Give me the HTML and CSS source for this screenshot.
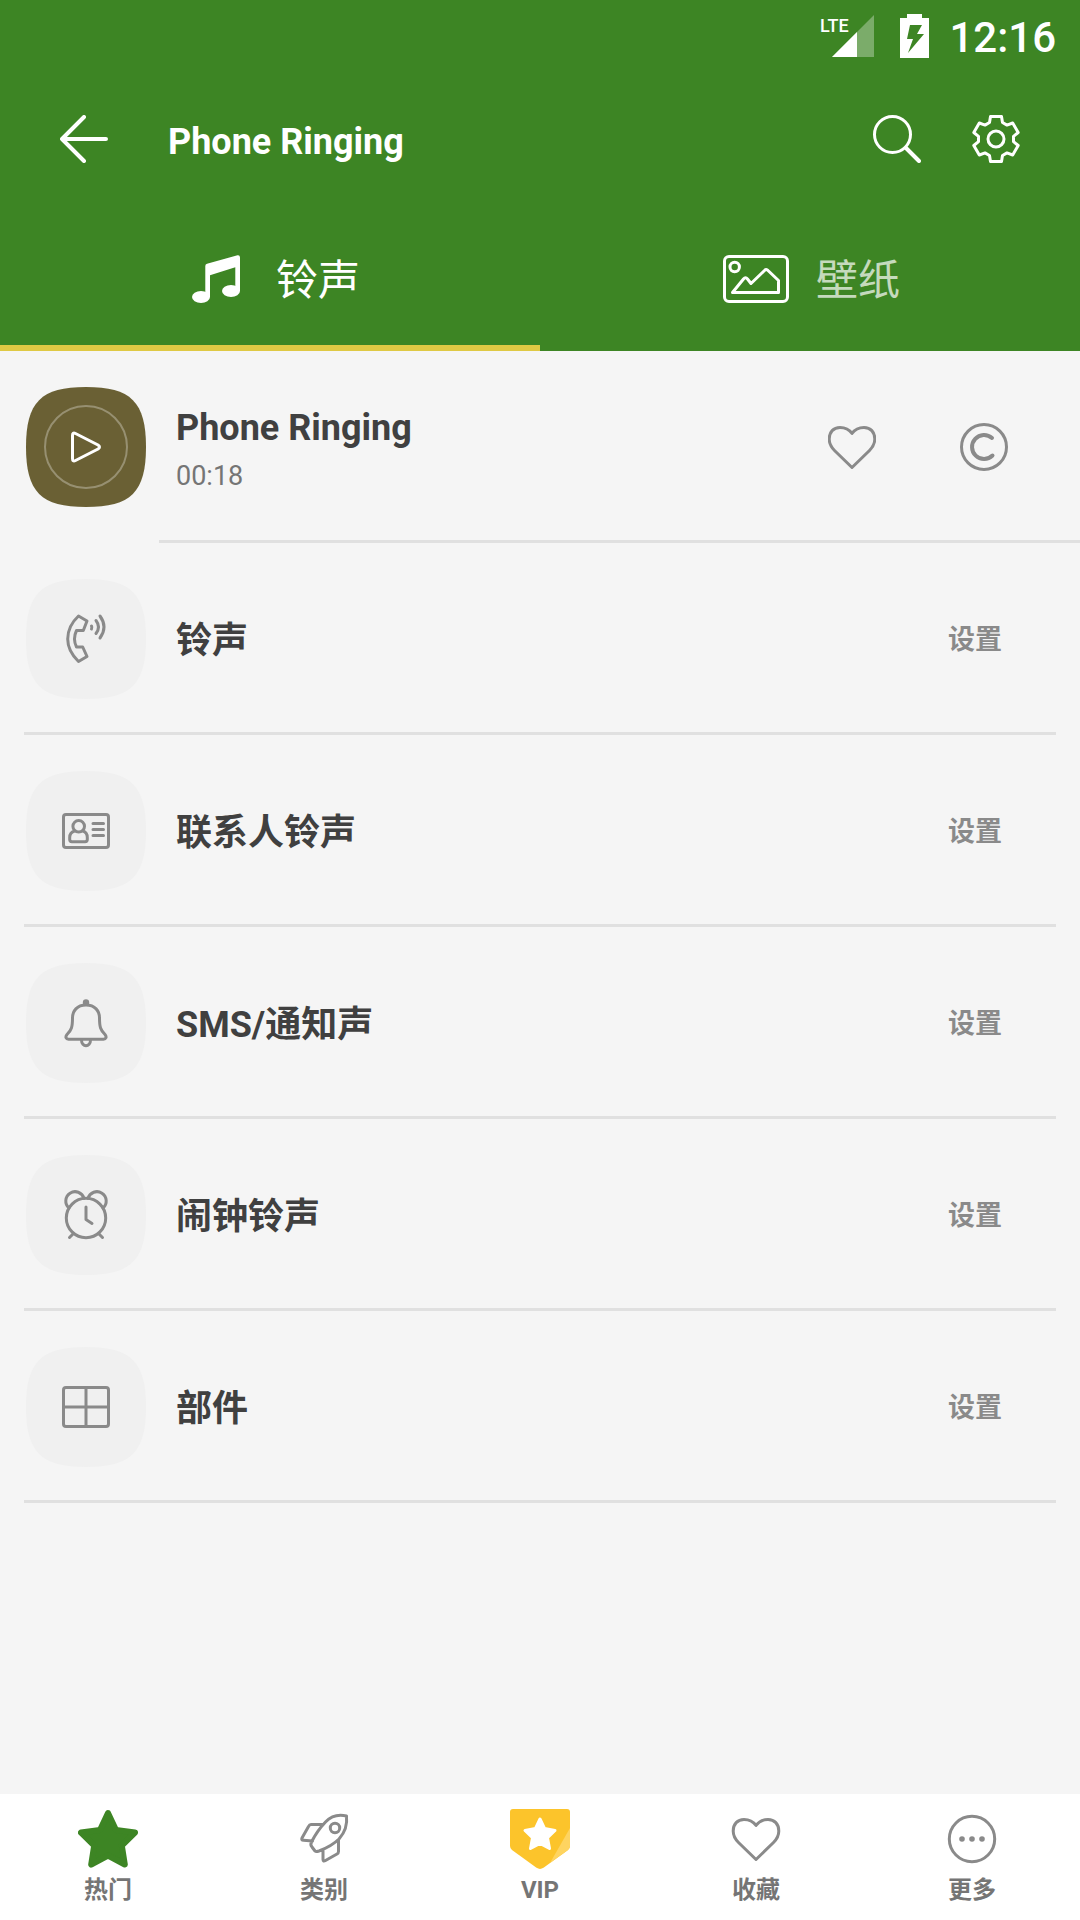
FILE: index.html
```html
<!DOCTYPE html>
<html lang="zh-CN">
<head>
<meta charset="utf-8">
<meta name="viewport" content="width=device-width, initial-scale=1">
<title>Phone Ringing</title>
<link rel="stylesheet" href="styles.css">
</head>
<body>
<header class="header">
  <div class="status">
    <svg class="status-signal" viewBox="0 0 54 44" role="img" aria-label="LTE">
      <path d="M12 43L54 1V43Z" fill="#fff" fill-opacity=".32"/>
      <path d="M12 43L37 18V43Z" fill="#fff"/>
      <text class="status-lte" x="0" y="18">LTE</text>
    </svg>
    <svg class="status-battery" viewBox="0 0 30 44" aria-hidden="true">
      <path fill="#fff" fill-rule="evenodd" d="M8 0H23V4H30V44H1V4H8ZM11 11L8 25H14L9 39L25 20H18L23 11Z"/>
    </svg>
    <time class="status-time">12:16</time>
  </div>
  <div class="appbar">
    <button class="icon-button" type="button" aria-label="Back">
      <svg class="icon" viewBox="0 0 48 48"><path class="line-bold" d="M46 24H2M24 2L2 24L24 46"/></svg>
    </button>
    <h1 class="appbar-title">Phone Ringing</h1>
    <div class="appbar-actions">
      <button class="icon-button" type="button" aria-label="Search">
        <svg class="icon" viewBox="0 0 48 48"><circle class="line" cx="19.5" cy="19.5" r="18"/><path class="line-bold" d="M33 33L46 46"/></svg>
      </button>
      <button class="icon-button" type="button" aria-label="Settings">
        <svg class="icon" viewBox="-24 -24 48 48"><path class="line" d="M-5.500-22.500H5.500L6.500-16.500L11-13.900L16.700-16L22.200-6.500L17.500-2.600V2.600L22.200 6.500L16.700 16L11 13.900L6.500 16.500L5.500 22.500H-5.500L-6.500 16.500L-11 13.900L-16.700 16L-22.200 6.500L-17.500 2.600V-2.600L-22.200-6.500L-16.700-16L-11-13.900L-6.500-16.500Z"/><circle class="line" r="8"/></svg>
      </button>
    </div>
  </div>
  <div class="tabs" role="tablist">
    <button class="tab tab-active" type="button" role="tab" aria-selected="true">
      <svg class="tab-icon" viewBox="0 0 66 48" aria-hidden="true"><path fill="currentColor" d="M22.300 11Q22.300 9.300 24 8.800L54.500.300Q57 0 57 2.500V36H52.300V12.300L27 20.300V42H22.300Z"/><ellipse cx="18" cy="42" rx="9" ry="6" fill="currentColor"/><ellipse cx="48" cy="36" rx="9" ry="6" fill="currentColor"/></svg>
      <span class="tab-label">铃声</span>
    </button>
    <button class="tab" type="button" role="tab" aria-selected="false">
      <svg class="tab-icon" viewBox="0 0 66 48" aria-hidden="true"><rect class="line" x="1.500" y="1.500" width="63" height="45" rx="4.500"/><circle class="line" cx="11.700" cy="12" r="4.700"/><path class="line" d="M9.500 37.500L20.500 24Q22.500 21.500 24.500 24L28 28.500L41.500 15.500Q43.300 13.500 45 15.500L55.500 25.500V37.500Z"/></svg>
      <span class="tab-label tab-label-dim">壁纸</span>
    </button>
  </div>
</header>

<main class="content">
  <section class="track">
    <button class="tile" type="button" aria-label="Play">
      <svg class="tile-art" viewBox="0 0 120 120"><path fill="#6a6034" d="M0 60C0 15 15 0 60 0S120 15 120 60S105 120 60 120S0 105 0 60Z"/><circle cx="60" cy="60" r="41" fill="none" stroke="#fff" stroke-opacity=".3" stroke-width="2"/><path d="M46.500 48.500Q46.500 45 49.500 46.500L72 58Q75 60 72 62L49.500 73.500Q46.500 75 46.500 71.500Z" fill="none" stroke="#fff" stroke-width="3"/></svg>
    </button>
    <div class="track-info">
      <h2 class="row-title">Phone Ringing</h2>
      <p class="track-time">00:18</p>
    </div>
    <div class="track-actions">
      <button class="icon-button" type="button" aria-label="Favorite">
        <svg class="icon" viewBox="6 6 48 48"><path class="line" d="M30 50.500L12.500 33.500C8.500 29.500 7.200 26 7.200 22C7.200 15 11.500 10.500 18 10.500C23.500 10.500 27.500 13 30 16.500C32.500 13 36.500 10.500 42 10.500C48.500 10.500 52.800 15 52.800 22C52.800 26 51.500 29.500 47.500 33.500Z"/></svg>
      </button>
      <button class="icon-button" type="button" aria-label="Copyright">
        <svg class="icon" viewBox="0 0 48 48"><circle class="line" cx="24" cy="24" r="22.500"/><path class="line-bold" d="M32 15A12 12 0 1 0 32.500 32.500"/></svg>
      </button>
    </div>
  </section>
  <hr class="divider">

  <ul class="options">
    <li class="option">
      <span class="tile"><svg class="tile-art" viewBox="0 0 120 120" aria-hidden="true"><path class="tile-bg" d="M0 60C0 15 15 0 60 0S120 15 120 60S105 120 60 120S0 105 0 60Z"/><path class="line" d="M52.500 37L61 42L57.300 51.500H50.500Q46.500 60 50.500 68H56.700L61 77.500L52.500 82.500Q41.700 72 41.700 60Q41.700 47 52.500 37Z"/><path class="line" d="M65.500 47Q66.300 48.500 65.500 50M70 41.500Q75 48 70 54.500M74 37Q82 48 74 59"/></svg></span>
      <h2 class="row-title">铃声</h2>
      <button class="set-button" type="button">设置</button>
    </li>
    <li class="option">
      <span class="tile"><svg class="tile-art" viewBox="0 0 120 120" aria-hidden="true"><path class="tile-bg" d="M0 60C0 15 15 0 60 0S120 15 120 60S105 120 60 120S0 105 0 60Z"/><rect class="line" x="37.500" y="43.500" width="45" height="33" rx="2.500"/><circle class="line" cx="52.700" cy="55.300" r="5.800"/><path class="line" d="M48.500 60Q43.700 61.500 43.700 66.500V68.500Q43.700 70.700 46 70.700H59Q61.300 70.700 61.300 68.500V66.500Q61.300 61.500 57 60M67 52.500H77.500M67 58.500H77.500M67 64.500H77.500"/></svg></span>
      <h2 class="row-title">联系人铃声</h2>
      <button class="set-button" type="button">设置</button>
    </li>
    <li class="option">
      <span class="tile"><svg class="tile-art" viewBox="0 0 120 120" aria-hidden="true"><path class="tile-bg" d="M0 60C0 15 15 0 60 0S120 15 120 60S105 120 60 120S0 105 0 60Z"/><circle cx="60" cy="39.500" r="3.200" fill="#8a8a8a"/><path class="line" d="M60 42C51 42 46.500 48 46.500 55C46.500 64 45.500 67 41 71.500C39 74 40 76.300 42.500 76.300H77.500C80 76.300 81 74 79 71.500C74.500 67 73.500 64 73.500 55C73.500 48 69 42 60 42ZM55.500 77C55.500 84.500 64.500 84.500 64.500 77"/></svg></span>
      <h2 class="row-title">SMS/通知声</h2>
      <button class="set-button" type="button">设置</button>
    </li>
    <li class="option">
      <span class="tile"><svg class="tile-art" viewBox="0 0 120 120" aria-hidden="true"><path class="tile-bg" d="M0 60C0 15 15 0 60 0S120 15 120 60S105 120 60 120S0 105 0 60Z"/><circle class="line" cx="60" cy="63" r="19.700"/><path class="line" d="M43 53A9.300 9.300 0 1 1 58 43.300M77 53A9.300 9.300 0 1 0 62 43.300M47 79L43.500 82.500M73 79L76.500 82.500M60 52V64.500L66 68.500"/></svg></span>
      <h2 class="row-title">闹钟铃声</h2>
      <button class="set-button" type="button">设置</button>
    </li>
    <li class="option">
      <span class="tile"><svg class="tile-art" viewBox="0 0 120 120" aria-hidden="true"><path class="tile-bg" d="M0 60C0 15 15 0 60 0S120 15 120 60S105 120 60 120S0 105 0 60Z"/><rect class="line" x="37.500" y="40.500" width="45" height="39" rx="2.500"/><path class="line" d="M60 41V79M38 60H82"/></svg></span>
      <h2 class="row-title">部件</h2>
      <button class="set-button" type="button">设置</button>
    </li>
  </ul>
</main>

<nav class="bottom-nav">
  <a class="nav-item" href="#hot">
    <svg class="nav-icon" viewBox="0 0 60 60" aria-hidden="true"><path fill="#3d8524" stroke="#3d8524" stroke-width="6" stroke-linejoin="round" d="M30 4L38 21L57 23.500L43.800 36.500L46.800 55.500L30 46.500L13.200 55.500L16.200 36.500L3 23.500L22 21Z"/></svg>
    <span>热门</span>
  </a>
  <a class="nav-item" href="#categories">
    <svg class="nav-icon" viewBox="0 0 60 60" aria-hidden="true"><path class="line" d="M52.500 7Q40 4 31.500 13Q23 22 17.500 33Q16 36 18 38L21 42Q22 43 25 42Q38 37 45 30Q54 20 52.500 7ZM28.500 15.500H17Q15.500 15.500 14.500 17.500L8 29Q7 31 9.500 31.200L18.500 32M29 41V50.500Q29 53 31.500 51.500L43 45Q44.500 44 44.500 42.500V31.500"/><circle class="line" cx="41" cy="19" r="4.700"/></svg>
    <span>类别</span>
  </a>
  <a class="nav-item" href="#vip">
    <svg class="nav-icon" viewBox="0 0 60 60" aria-hidden="true"><path fill="#fcc42b" d="M0 3Q0 0 3 0H57Q60 0 60 3V37Q60 39.500 58 41L33.500 58.800Q30 61 26.500 58.800L2 41Q0 39.500 0 37Z"/><path fill="#fed460" d="M60 19V37Q60 39.500 58 41L40 54Z"/><path fill="#fff" stroke="#fff" stroke-width="3" stroke-linejoin="round" d="M30 10L34.500 19.500L45 21.500L37.500 28.800L39.500 39.500L30 34.500L20.500 39.500L22.500 28.800L15 21.500L25.500 19.500Z"/></svg>
    <span>VIP</span>
  </a>
  <a class="nav-item" href="#favorites">
    <svg class="nav-icon" viewBox="0 0 60 60" aria-hidden="true"><path class="line" d="M30 50.500L12.500 33.500C8.500 29.500 7.200 26 7.200 22C7.200 15 11.500 10.500 18 10.500C23.500 10.500 27.500 13 30 16.500C32.500 13 36.500 10.500 42 10.500C48.500 10.500 52.800 15 52.800 22C52.800 26 51.500 29.500 47.500 33.500Z"/></svg>
    <span>收藏</span>
  </a>
  <a class="nav-item" href="#more">
    <svg class="nav-icon" viewBox="0 0 60 60" aria-hidden="true"><circle class="line" cx="30" cy="30" r="22.700"/><g fill="#8a8a8a"><circle cx="20" cy="30" r="2.800"/><circle cx="30" cy="30" r="2.800"/><circle cx="40" cy="30" r="2.800"/></g></svg>
    <span>更多</span>
  </a>
</nav>
</body>
</html>
```

FILE: styles.css
```css
* {
  box-sizing: border-box;
  margin: 0;
  padding: 0;
}

body {
  display: flex;
  flex-direction: column;
  min-height: 100vh;
  background: #f5f5f5;
  color: #404040;
  font-family: Roboto, "Noto Sans CJK SC", sans-serif;
}

button {
  border: 0;
  background: none;
  color: inherit;
  font: inherit;
  cursor: pointer;
}

svg {
  display: block;
}

.line,
.line-bold {
  fill: none;
  stroke: currentColor;
  stroke-width: 3;
  stroke-linecap: round;
  stroke-linejoin: round;
}

.line-bold {
  stroke-width: 4;
}

/* Header */

.header {
  background: #3d8524;
  color: #fff;
}

.status {
  display: flex;
  align-items: center;
  justify-content: flex-end;
  height: 72px;
  padding-right: 24px;
}

.status-signal {
  width: 54px;
  height: 44px;
  margin-right: 25px;
  overflow: visible;
}

.status-lte {
  fill: #fff;
  font: 500 18px "Liberation Sans Narrow", Roboto, sans-serif;
}

.status-battery {
  width: 30px;
  height: 44px;
  margin-right: 20px;
}

.status-time {
  padding-top: 4px;
  font-size: 42px;
  font-weight: 500;
  line-height: 68px;
}

.appbar {
  display: flex;
  align-items: center;
  height: 135px;
  padding: 0 60px 2px;
}

.icon-button,
.icon {
  display: block;
  width: 48px;
  height: 48px;
}

.appbar-title {
  flex: 1;
  margin-left: 60px;
  padding-top: 6px;
  font-size: 36px;
  font-weight: 700;
  line-height: 48px;
}

.appbar-actions {
  display: flex;
  gap: 51px;
}

.tabs {
  display: grid;
  grid-template-columns: 1fr 1fr;
}

.tab {
  display: flex;
  align-items: center;
  justify-content: center;
  gap: 27px;
  height: 144px;
  padding-left: 3px;
  border-top: 6px solid transparent;
  border-bottom: 6px solid transparent;
  font-size: 42px;
}

.tab-active {
  border-bottom-color: #dfc944;
}

.tab-icon {
  width: 66px;
  height: 48px;
}

.tab-label {
  padding-bottom: 5px;
}

.tab-label-dim {
  opacity: 0.7;
}

/* Track and options */

.content {
  flex: 1;
}

.tile,
.tile-art {
  display: block;
  flex: none;
  width: 120px;
  height: 120px;
}

.tile {
  color: #8a8a8a;
}

.tile-bg {
  fill: #f0f0f0;
}

.row-title {
  flex: 1;
  padding-top: 4px;
  font-size: 36px;
  font-weight: 700;
  line-height: 48px;
}

.track {
  display: flex;
  align-items: center;
  gap: 30px;
  padding: 36px 72px 33px 26px;
}

.track-info {
  flex: 1;
  padding-top: 6px;
}

.track-time {
  color: #757575;
  font-size: 27px;
  line-height: 48px;
}

.track-actions {
  display: flex;
  gap: 84px;
  color: #8a8a8a;
}

.divider {
  height: 3px;
  margin-left: 159px;
  border: 0;
  background: #e0e0e0;
}

.options {
  padding: 0 24px;
  list-style: none;
}

.option {
  display: flex;
  align-items: center;
  gap: 30px;
  padding: 36px 54px 33px 2px;
  border-bottom: 3px solid #e0e0e0;
}

.set-button {
  padding-top: 2px;
  color: #8a8a8a;
  font-size: 27px;
  font-weight: 700;
  line-height: 48px;
}

/* Bottom navigation */

.bottom-nav {
  display: grid;
  grid-template-columns: repeat(5, 1fr);
  padding: 15px 0 9px;
  background: #fff;
}

.nav-item {
  display: flex;
  flex-direction: column;
  align-items: center;
  color: #757575;
  font-size: 24px;
  font-weight: 700;
  line-height: 42px;
  text-decoration: none;
}

.nav-icon {
  width: 60px;
  height: 60px;
  color: #8a8a8a;
}
```
